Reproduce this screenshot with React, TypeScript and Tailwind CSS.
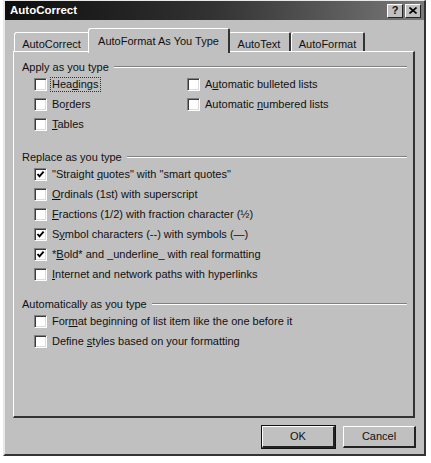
import type { ReactNode } from 'react';

const font = "font-['Liberation_Sans',Arial,sans-serif]";

function Check({ on }: { on?: boolean }) {
  return (
    <span className="relative flex h-[13px] w-[13px] shrink-0 items-center justify-center border-t border-l border-t-[#808080] border-l-[#808080] border-r border-b border-r-white border-b-white bg-white shadow-[inset_1px_1px_0_#3a3a3a,inset_-1px_-1px_0_#dcdcdc]">
      {on && (
        <svg width="9" height="9" viewBox="0 0 9 9" className="block">
          <path d="M1.5 4 L3.5 6.3 L7.6 1.6" fill="none" stroke="#000" strokeWidth="1.9" />
        </svg>
      )}
    </span>
  );
}

function Row({ on, children, focus }: { on?: boolean; children: ReactNode; focus?: boolean }) {
  return (
    <div className="flex h-[20px] items-center gap-[3px]">
      <Check on={on} />
      <span
        className={
          focus
            ? 'border border-dotted border-[#333] px-[1px] leading-[13px]'
            : 'px-[2px] leading-[13px]'
        }
      >
        {children}
      </span>
    </div>
  );
}

function Group({ title, className, children }: { title: string; className?: string; children: ReactNode }) {
  return (
    <div className={className}>
      <div className="flex h-[14px] items-center gap-[5px] pr-[6px]">
        <span className="leading-[14px]">{title}</span>
        <div className="h-[2px] flex-1 border-t border-t-[#808080] border-b border-b-white" />
      </div>
      <div className="pl-[12px]">{children}</div>
    </div>
  );
}

function Tab({ label, active, w }: { label: string; active?: boolean; w: string }) {
  if (active) {
    return (
      <div
        className={`relative z-10 -mx-[2px] -mb-[2px] flex h-[25px] items-start justify-center rounded-tl-[3px] rounded-tr-[2px] border-t border-l border-t-white border-l-white border-r-2 border-r-[#333] bg-[#c0c0c0] pt-[4px] ${w}`}
      >
        {label}
      </div>
    );
  }
  return (
    <div
      className={`flex h-[19px] items-start justify-center rounded-tl-[3px] rounded-tr-[2px] border-t border-l border-t-white border-l-white border-r-2 border-r-[#333] pt-[3px] ${w}`}
    >
      {label}
    </div>
  );
}

function Btn({ children, def }: { children: ReactNode; def?: boolean }) {
  return (
    <div
      className={`flex h-[22px] w-[73px] items-center justify-center border-t border-l border-t-white border-l-white border-r-2 border-b-2 border-r-[#222] border-b-[#222] ${
        def ? 'outline outline-1 outline-[#111]' : ''
      }`}
    >
      {children}
    </div>
  );
}

export default function App() {
  return (
    <div className={`h-[463px] w-[431px] bg-white pl-[3px] text-[11px] text-[#111] ${font}`}>
      <div className="flex h-[456px] w-[423px] flex-col border-t border-l-2 border-t-[#e8e8e8] border-l-[#e8e8e8] border-r-2 border-b-2 border-r-[#333] border-b-[#333] bg-[#c0c0c0]">
        {/* title bar */}
        <div className="flex h-[19px] items-center justify-between bg-gradient-to-r from-[#0e0e0e] via-[#333] to-[#7a7a7a] pl-[5px] pr-[3px]">
          <span className="text-[11.5px] font-bold text-white">AutoCorrect</span>
          <div className="flex gap-[2px]">
            <div className="flex h-[14px] w-[16px] items-center justify-center border-t border-l border-t-white border-l-white border-r border-b border-r-[#222] border-b-[#222] bg-[#c0c0c0] text-[11px] font-bold leading-none">
              ?
            </div>
            <div className="flex h-[14px] w-[16px] items-center justify-center border-t border-l border-t-white border-l-white border-r border-b border-r-[#222] border-b-[#222] bg-[#c0c0c0]">
              <svg width="8" height="7" viewBox="0 0 8 7">
                <path d="M0.5 0.5 L7.5 6.5 M7.5 0.5 L0.5 6.5" stroke="#000" strokeWidth="1.6" />
              </svg>
            </div>
          </div>
        </div>

        {/* tabs */}
        <div className="mt-[8px] flex h-[23px] items-end pl-[9px]">
          <Tab label="AutoCorrect" w="w-[76px]" />
          <Tab label="AutoFormat As You Type" active w="w-[142px]" />
          <Tab label="AutoText" w="w-[63px]" />
          <Tab label="AutoFormat" w="w-[74px]" />
        </div>

        {/* panel */}
        <div className="ml-[8px] h-[367px] w-[402px] border-t border-l border-t-white border-l-white border-r-2 border-b-2 border-r-[#333] border-b-[#333] pl-[8px] pt-[8px]">
          <Group title="Apply as you type">
            <div className="flex">
              <div className="w-[153px]">
                <Row focus>
                  Hea<u>d</u>ings
                </Row>
                <Row>
                  Bo<u>r</u>ders
                </Row>
                <Row>
                  <u>T</u>ables
                </Row>
              </div>
              <div>
                <Row>
                  A<u>u</u>tomatic bulleted lists
                </Row>
                <Row>
                  Automatic <u>n</u>umbered lists
                </Row>
              </div>
            </div>
          </Group>

          <Group title="Replace as you type" className="mt-[16px]">
            <Row on>
              "Straight <u>q</u>uotes" with "smart quotes"
            </Row>
            <Row>
              <u>O</u>rdinals (1st) with superscript
            </Row>
            <Row>
              <u>F</u>ractions (1/2) with fraction character (½)
            </Row>
            <Row on>
              S<u>y</u>mbol characters (--) with symbols (—)
            </Row>
            <Row on>
              *<u>B</u>old* and _underline_ with real formatting
            </Row>
            <Row>
              <u>I</u>nternet and network paths with hyperlinks
            </Row>
          </Group>

          <Group title="Automatically as you type" className="mt-[13px]">
            <Row>
              For<u>m</u>at beginning of list item like the one before it
            </Row>
            <Row>
              Define <u>s</u>tyles based on your formatting
            </Row>
          </Group>
        </div>

        {/* buttons */}
        <div className="mt-[8px] flex justify-end gap-[8px] pr-[8px]">
          <Btn def>OK</Btn>
          <Btn>Cancel</Btn>
        </div>
      </div>
    </div>
  );
}
